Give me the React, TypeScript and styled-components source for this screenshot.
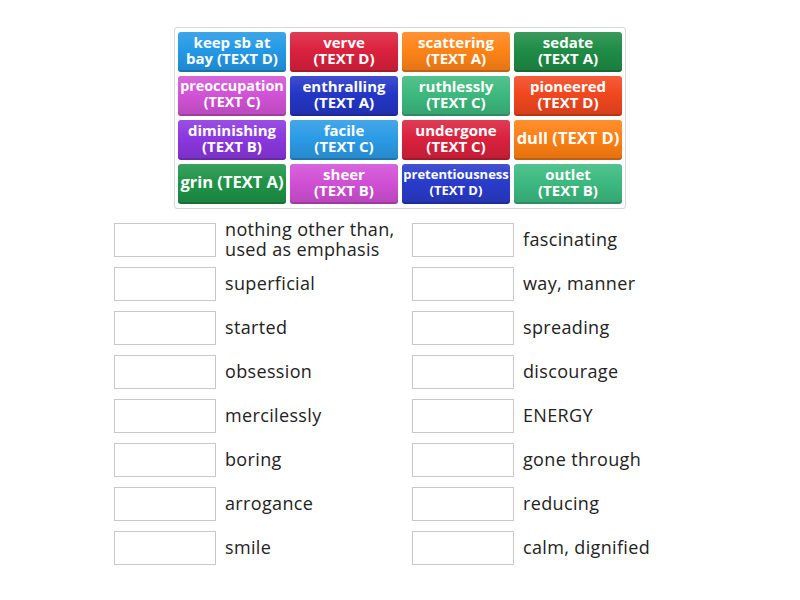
import React from "react";
import styled, { createGlobalStyle } from "styled-components";

const Global = createGlobalStyle`
  html, body { margin: 0; padding: 0; background: #fff; }
  body { font-family: "Open Sans", "Liberation Sans", sans-serif; }
`;

const Page = styled.div`
  width: 800px;
  height: 600px;
  display: flex;
  flex-direction: column;
  align-items: center;
  padding-top: 27px;
  box-sizing: border-box;
`;

const Bank = styled.div`
  width: 452px;
  box-sizing: border-box;
  border: 1px solid #d6d6d6;
  border-radius: 3px;
  padding: 4px 3px 4px 3px;
  display: grid;
  grid-template-columns: repeat(4, 108px);
  grid-auto-rows: 40px;
  gap: 4px;
`;

const Tile = styled.div<{ $c: string; $fs: number }>`
  background: linear-gradient(
    to bottom,
    color-mix(in srgb, ${(p) => p.$c} 88%, #fff) 0%,
    ${(p) => p.$c} 45%,
    color-mix(in srgb, ${(p) => p.$c} 88%, #000) 100%
  );
  border-radius: 3px;
  box-shadow: inset 0 -2px 0 rgba(0, 0, 0, 0.15);
  color: #fff;
  font-weight: 700;
  font-size: ${(p) => p.$fs}px;
  line-height: 16px;
  display: flex;
  align-items: center;
  justify-content: center;
  text-align: center;
  white-space: nowrap;
  padding-bottom: 4px;
  box-sizing: border-box;
`;

const Match = styled.div`
  margin-top: 9px;
  width: 596px;
  display: grid;
  grid-template-columns: 298px 298px;
  grid-auto-flow: column;
  grid-template-rows: repeat(8, 44px);
`;

const Item = styled.div`
  display: flex;
  align-items: center;
  padding-left: 12px;
`;

const Slot = styled.div`
  width: 102px;
  height: 34px;
  box-sizing: border-box;
  border: 1px solid #c8c8c8;
  background: #fff;
  flex-shrink: 0;
  margin-right: 9px;
`;

const Label = styled.div`
  font-size: 18px;
  line-height: 20px;
  color: #222;
  max-width: 180px;
  letter-spacing: 0.35px;
  padding-bottom: 3px;
`;

const tiles: [string, string, string, number][] = [
  ["keep sb at", "bay (TEXT D)", "#2399e6", 15],
  ["verve", "(TEXT D)", "#dc213d", 15],
  ["scattering", "(TEXT A)", "#ff8417", 15],
  ["sedate", "(TEXT A)", "#1f8c46", 15],
  ["preoccupation", "(TEXT C)", "#d253d6", 14.3],
  ["enthralling", "(TEXT A)", "#2436c6", 15],
  ["ruthlessly", "(TEXT C)", "#3db97e", 15],
  ["pioneered", "(TEXT D)", "#f1471f", 15],
  ["diminishing", "(TEXT B)", "#8b37df", 15],
  ["facile", "(TEXT C)", "#2b9be6", 15],
  ["undergone", "(TEXT C)", "#da213d", 15],
  ["dull (TEXT D)", "", "#ff8013", 16.5],
  ["grin (TEXT A)", "", "#1f9448", 16.5],
  ["sheer", "(TEXT B)", "#d150d5", 15],
  ["pretentiousness", "(TEXT D)", "#293bcb", 13],
  ["outlet", "(TEXT B)", "#3cba80", 15],
];

const left = [
  "nothing other than, used as emphasis",
  "superficial",
  "started",
  "obsession",
  "mercilessly",
  "boring",
  "arrogance",
  "smile",
];

const right = [
  "fascinating",
  "way, manner",
  "spreading",
  "discourage",
  "ENERGY",
  "gone through",
  "reducing",
  "calm, dignified",
];

export default function App() {
  return (
    <>
      <Global />
      <Page>
        <Bank>
          {tiles.map(([a, b, c, fs], i) => (
            <Tile key={i} $c={c} $fs={fs}>
              <span>
                {a}
                {b && <br />}
                {b}
              </span>
            </Tile>
          ))}
        </Bank>
        <Match>
          {[...left, ...right].map((t, i) => (
            <Item key={i}>
              <Slot />
              <Label>{t}</Label>
            </Item>
          ))}
        </Match>
      </Page>
    </>
  );
}
